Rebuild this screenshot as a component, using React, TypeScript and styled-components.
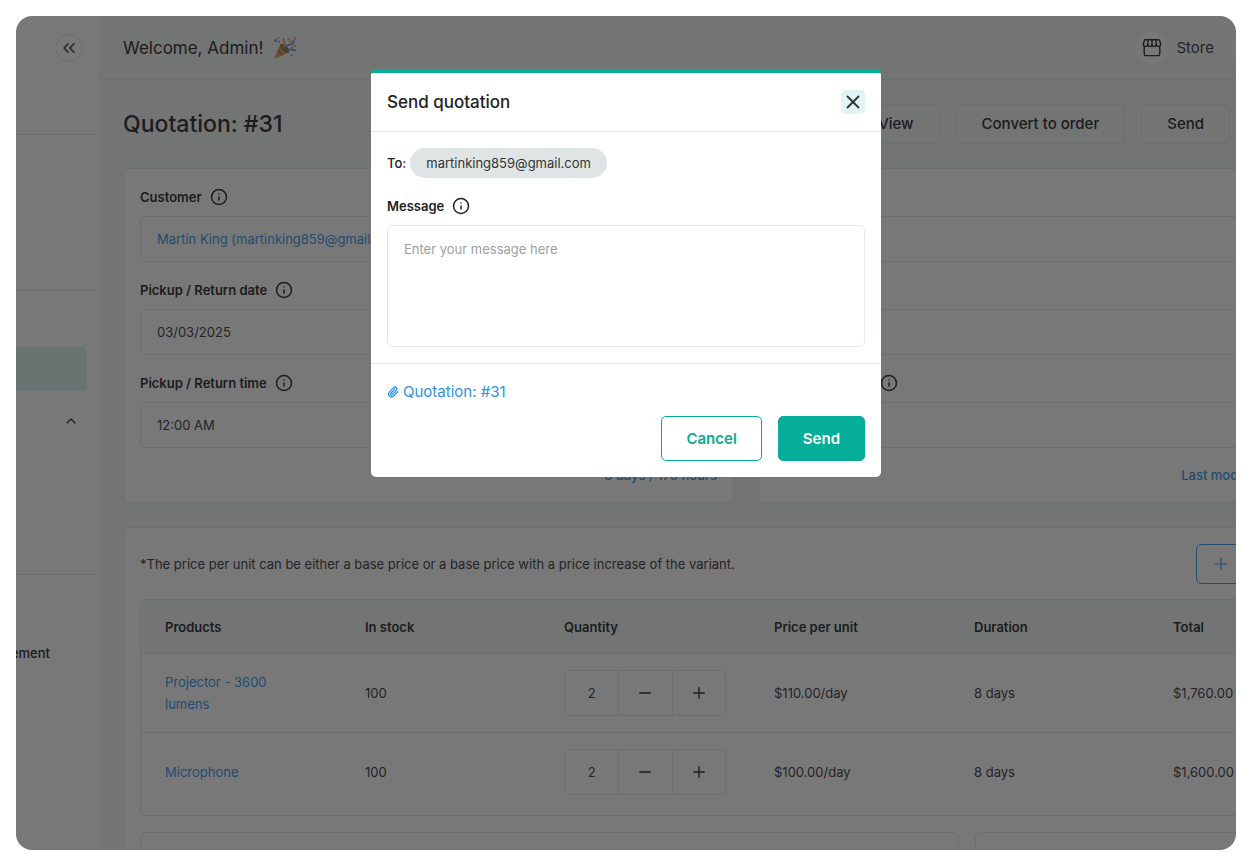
import React from "react";
import styled, { createGlobalStyle, css } from "styled-components";
import { ChevronsLeft, ChevronUp, Info, Minus, Paperclip, Plus, X } from "lucide-react";

const color = {
  text: "#222226",
  body: "#333338",
  teal: "#06ad98",
  tealSoft: "#e0f5f3",
  blue: "#2e93e6",
  line: "#e3e9e8",
  page: "#f3f7f6",
  chip: "#dfe5e4",
  placeholder: "#9aa2a3",
};

const GlobalStyle = createGlobalStyle`
  *, *::before, *::after { box-sizing: border-box; }
  body {
    margin: 0;
    background: #fff;
    color: ${color.body};
    font: 400 13px/22px Inter, "Liberation Sans", sans-serif;
  }
  button, input, textarea { font: inherit; color: inherit; }
  button { cursor: pointer; }
  h1, h2, p { margin: 0; }
  a { color: ${color.blue}; text-decoration: none; }
`;

const Screen = styled.div`
  height: 100vh;
  padding: 16px 16px 17px;
`;

const Frame = styled.div`
  position: relative;
  display: flex;
  height: 100%;
  overflow: hidden;
  border-radius: 16px;
  background: #fff;
`;

const Sidebar = styled.nav`
  display: flex;
  flex: 0 0 83px;
  flex-direction: column;
  overflow: hidden;
`;

const SideSection = styled.div<{ $height?: number; $top?: number }>`
  display: flex;
  flex: none;
  flex-direction: column;
  align-items: flex-end;
  gap: 8px;
  height: ${(p) => (p.$height ? `${p.$height}px` : "auto")};
  margin-right: 4px;
  padding-top: ${(p) => p.$top ?? 0}px;
  & + & { border-top: 1px solid #dfe3e3; }
`;

const CollapseButton = styled.button`
  display: grid;
  place-items: center;
  width: 28px;
  height: 28px;
  margin-right: 12px;
  padding: 0;
  border: 1px solid ${color.line};
  border-radius: 50%;
  background: #fff;
`;

const SideItem = styled.a<{ $active?: boolean; $end?: number }>`
  display: flex;
  align-items: center;
  justify-content: flex-end;
  width: 71px;
  height: 44px;
  margin-right: 8px;
  padding-right: ${(p) => p.$end ?? 8}px;
  border-radius: 0 6px 6px 0;
  background: ${(p) => (p.$active ? "#e0f3f0" : "transparent")};
  color: ${color.text};
  font-weight: 500;
  white-space: nowrap;
`;

const Main = styled.main`
  flex: 1;
  min-width: 0;
  overflow: hidden;
  background: ${color.page};
`;

const TopBar = styled.header`
  display: flex;
  align-items: center;
  justify-content: space-between;
  width: calc(100% + 26px);
  height: 64px;
  padding-left: 24px;
  border-bottom: 1px solid ${color.line};
`;

const Welcome = styled.div`
  display: flex;
  align-items: center;
  gap: 10px;
  color: ${color.text};
  font-size: 17px;
`;

const TopLinks = styled.div`
  display: flex;
  align-items: center;
  gap: 16px;
`;

const StoreLink = styled.a`
  display: flex;
  align-items: center;
  gap: 8px;
  color: ${color.body};
  font-size: 15px;
`;

const Round = styled.span`
  display: grid;
  place-items: center;
  width: 32px;
  height: 32px;
  border-radius: 50%;
  background: #fcfcfc;
`;

const TitleRow = styled.div`
  display: flex;
  align-items: center;
  justify-content: space-between;
  padding: 24px 6px 24px 24px;
`;

const PageTitle = styled.h1`
  color: ${color.text};
  font-size: 23px;
  line-height: 32px;
  font-weight: 500;
`;

const Actions = styled.div`
  display: flex;
  gap: 16px;
`;

const GhostButton = styled.button`
  height: 40px;
  padding: 0 25px;
  border: 1px solid ${color.line};
  border-radius: 6px;
  background: transparent;
  color: ${color.text};
  font-size: 15px;
  font-weight: 500;
`;

const Content = styled.div`
  display: grid;
  gap: 24px;
  width: calc(100% + 157px);
  padding: 0 24px;
`;

const Columns = styled.div`
  display: grid;
  grid-template-columns: 1fr 1fr;
  gap: 24px;
`;

const Card = styled.section`
  padding: 16px;
  border: 1px solid ${color.line};
  border-radius: 6px;
  background: #fff;
`;

const Field = styled.div`
  display: flex;
  flex-direction: column;
  gap: 7px;
  margin-bottom: 16px;
`;

const LabelRow = styled.div`
  display: flex;
  align-items: center;
  gap: 8px;
  height: 24px;
  color: ${color.text};
  font-weight: 600;
`;

const fieldBox = css`
  width: 100%;
  border: 1px solid ${color.line};
  border-radius: 6px;
  background: #fff;
`;

const TextInput = styled.input<{ $link?: boolean }>`
  ${fieldBox}
  height: 46px;
  padding: 0 16px;
  color: ${(p) => (p.$link ? color.blue : color.body)};
`;

const CardNote = styled.div`
  color: ${color.blue};
  font-weight: 500;
  text-align: right;
`;

const ModifiedNote = styled(CardNote)`
  padding-right: 4px;
`;

const NoteRow = styled.div`
  display: flex;
  align-items: center;
  justify-content: space-between;
  margin-bottom: 15px;
`;

const AddButton = styled.button`
  display: flex;
  align-items: center;
  gap: 8px;
  width: 156px;
  height: 40px;
  padding: 0 14px;
  border: 1px solid ${color.blue};
  border-radius: 6px;
  background: #fff;
  color: ${color.blue};
  white-space: nowrap;
`;

const TableFrame = styled.div`
  margin-bottom: 16px;
  padding-bottom: 3px;
  border: 1px solid ${color.line};
  border-radius: 6px;
  overflow: hidden;
`;

const Table = styled.table`
  width: 100%;
  border-collapse: collapse;
  table-layout: fixed;
  tbody tr + tr { border-top: 1px solid ${color.line}; }
`;

const HeadCell = styled.th<{ $width?: number }>`
  width: ${(p) => (p.$width ? `${p.$width}px` : "auto")};
  padding: 16px 24px 15px;
  border-bottom: 1px solid ${color.line};
  background: ${color.page};
  color: ${color.text};
  font-weight: 600;
  text-align: left;
`;

const Cell = styled.td`
  height: 79px;
  padding: 16px 24px;
  vertical-align: middle;
`;

const ProductLink = styled.a`
  display: block;
  max-width: 120px;
`;

const Stepper = styled.div`
  display: grid;
  grid-template-columns: repeat(3, 1fr);
  width: 162px;
  height: 46px;
  border: 1px solid ${color.line};
  border-radius: 6px;
  overflow: hidden;
`;

const StepperInput = styled.input`
  width: 100%;
  padding: 0;
  border: 0;
  background: none;
  text-align: center;
`;

const StepperButton = styled.button`
  display: grid;
  place-items: center;
  padding: 0;
  border: 0;
  border-left: 1px solid ${color.line};
  background: none;
  color: ${color.text};
`;

const Summary = styled.div`
  display: grid;
  grid-template-columns: 819fr 377fr;
  gap: 16px;
`;

const SummaryBox = styled.div`
  height: 120px;
  border: 1px solid ${color.line};
  border-radius: 6px;
`;

const Backdrop = styled.div`
  position: absolute;
  inset: 0;
  display: flex;
  align-items: flex-start;
  justify-content: center;
  padding-top: 53px;
  background: rgba(26, 26, 26, 0.59);
`;

const Dialog = styled.div`
  width: 510px;
  max-width: 100%;
  border-top: 4px solid ${color.teal};
  border-radius: 5px;
  background: #fff;
`;

const DialogHeader = styled.div`
  display: flex;
  align-items: center;
  justify-content: space-between;
  padding: 16px;
  border-bottom: 1px solid ${color.line};
`;

const DialogTitle = styled.h2`
  color: ${color.text};
  font-size: 17px;
  line-height: 26px;
  font-weight: 500;
`;

const CloseButton = styled.button`
  display: grid;
  place-items: center;
  width: 24px;
  height: 24px;
  padding: 0;
  border: 0;
  border-radius: 5px;
  background: ${color.tealSoft};
`;

const DialogBody = styled.div`
  padding: 16px;
`;

const Recipient = styled.div`
  display: flex;
  align-items: center;
  gap: 4px;
  margin-bottom: 16px;
  color: ${color.text};
  font-weight: 500;
`;

const Chip = styled.span`
  padding: 4px 16px;
  border-radius: 15px;
  background: ${color.chip};
  color: ${color.body};
  font-weight: 400;
`;

const MessageLabel = styled(LabelRow)`
  margin-bottom: 7px;
`;

const MessageBox = styled.textarea`
  ${fieldBox}
  display: block;
  height: 122px;
  padding: 12px 16px;
  resize: none;
  &::placeholder { color: ${color.placeholder}; opacity: 1; }
`;

const DialogFooter = styled.div`
  display: grid;
  gap: 12px;
  padding: 16px;
  border-top: 1px solid ${color.line};
`;

const Attachment = styled.a`
  display: flex;
  align-items: center;
  gap: 4px;
  font-size: 15px;
  line-height: 24px;
`;

const DialogActions = styled.div`
  display: flex;
  justify-content: flex-end;
  gap: 16px;
`;

const ActionButton = styled.button<{ $primary?: boolean }>`
  height: 45px;
  padding: 0 24px;
  border: 1px solid ${color.teal};
  border-radius: 5px;
  background: ${(p) => (p.$primary ? color.teal : "#fff")};
  color: ${(p) => (p.$primary ? "#fff" : color.teal)};
  font-size: 15px;
  font-weight: 600;
`;

const PartyPopper = () => (
  <svg width="24" height="24" viewBox="0 0 24 24" aria-hidden="true">
    <path d="M7.5 8 L16 16.5 L2.6 22.2 Q1 22.6 1.6 21 Z" fill="#e0a356" />
    <path d="M5.6 12.6 L11 18.6 L8.2 19.8 L4.4 15.4 Z" fill="#b9803f" />
    <ellipse cx="11.8" cy="12.2" rx="5.8" ry="2.8" transform="rotate(45 11.8 12.2)" fill="#94683a" />
    <path d="M10.5 11.5 Q12.5 7.5 10.5 3" fill="none" stroke="#dfa053" strokeWidth="1.8" strokeLinecap="round" />
    <path d="M12.5 12.5 Q13.5 8.5 17 8.6 T20.5 4.5" fill="none" stroke="#5b95c8" strokeWidth="1.8" strokeLinecap="round" />
    <path d="M14 14.5 Q17 12.4 22.5 14.4" fill="none" stroke="#5b95c8" strokeWidth="1.6" strokeLinecap="round" />
    <g fill="#dfa053">
      <rect x="14.4" y="2" width="2.2" height="2.2" />
      <rect x="20.6" y="8.6" width="2.2" height="2.2" />
      <circle cx="19.3" cy="11.6" r="1" />
    </g>
    <g fill="#5b95c8">
      <rect x="1.4" y="3.4" width="2.4" height="2.4" />
      <circle cx="6" cy="5.4" r="1" />
      <circle cx="18.6" cy="19.4" r="1.1" />
    </g>
    <g fill="#cf7468">
      <circle cx="5.2" cy="2" r="1" />
      <circle cx="22" cy="2.4" r="1" />
      <circle cx="17.4" cy="5.4" r="0.9" />
    </g>
  </svg>
);

const StoreIcon = () => (
  <svg
    width="20"
    height="20"
    viewBox="0 0 20 20"
    fill="none"
    stroke={color.text}
    strokeWidth="1.4"
    strokeLinecap="round"
    strokeLinejoin="round"
    aria-hidden="true"
  >
    <path d="M3.4 1.8 H16.6 Q17.4 1.8 17.7 2.8 L18.6 5.6 V6.4 A2.1 1.9 0 0 1 14.3 6.4 A2.1 1.9 0 0 1 10 6.4 A2.1 1.9 0 0 1 5.7 6.4 A2.1 1.9 0 0 1 1.4 6.4 V5.6 L2.3 2.8 Q2.6 1.8 3.4 1.8 Z" />
    <path d="M6.2 1.8 L5.7 6.4 M10 1.8 V6.4 M13.8 1.8 L14.3 6.4" />
    <path d="M2.2 8.6 V16 Q2.2 17.6 3.8 17.6 H16.2 Q17.8 17.6 17.8 16 V8.6" />
  </svg>
);

const Hint = () => <Info size={18} strokeWidth={2} aria-hidden="true" />;

type LabeledInputProps = { id: string; label: string; value: string; link?: boolean };

const LabeledInput = ({ id, label, value, link }: LabeledInputProps) => (
  <Field>
    <LabelRow>
      <label htmlFor={id}>{label}</label>
      <Hint />
    </LabelRow>
    <TextInput id={id} defaultValue={value} $link={link} />
  </Field>
);

const columns = [
  { title: "Products", width: 200 },
  { title: "In stock", width: 199 },
  { title: "Quantity", width: 210 },
  { title: "Price per unit", width: 200 },
  { title: "Duration", width: 199 },
  { title: "Total" },
];

const products = [
  { name: "Projector - 3600 lumens", stock: 100, quantity: 2, price: "$110.00/day", duration: "8 days", total: "$1,760.00" },
  { name: "Microphone", stock: 100, quantity: 2, price: "$100.00/day", duration: "8 days", total: "$1,600.00" },
];

const SendQuotationDialog = () => (
  <Backdrop>
    <Dialog role="dialog" aria-modal="true" aria-labelledby="dialog-title">
      <DialogHeader>
        <DialogTitle id="dialog-title">Send quotation</DialogTitle>
        <CloseButton type="button" aria-label="Close">
          <X size={22} strokeWidth={2} />
        </CloseButton>
      </DialogHeader>
      <DialogBody>
        <Recipient>
          To: <Chip>martinking859@gmail.com</Chip>
        </Recipient>
        <MessageLabel>
          <label htmlFor="message">Message</label>
          <Hint />
        </MessageLabel>
        <MessageBox id="message" placeholder="Enter your message here" />
      </DialogBody>
      <DialogFooter>
        <Attachment href="#quotation">
          <Paperclip size={12} strokeWidth={2.6} aria-hidden="true" />
          Quotation: #31
        </Attachment>
        <DialogActions>
          <ActionButton type="button">Cancel</ActionButton>
          <ActionButton type="button" $primary>
            Send
          </ActionButton>
        </DialogActions>
      </DialogFooter>
    </Dialog>
  </Backdrop>
);

export default function App() {
  return (
    <Screen>
      <GlobalStyle />
      <Frame>
        <Sidebar aria-label="Main">
          <SideSection $height={118} $top={18}>
            <CollapseButton type="button" aria-label="Collapse sidebar">
              <ChevronsLeft size={20} strokeWidth={1.8} />
            </CollapseButton>
          </SideSection>
          <SideSection $height={156} />
          <SideSection $height={284} $top={56}>
            <SideItem href="#quotations" $active aria-label="Quotations" />
            <SideItem href="#more" aria-label="More">
              <ChevronUp size={16} strokeWidth={1.8} />
            </SideItem>
          </SideSection>
          <SideSection $top={56}>
            <SideItem href="#management" $end={37}>
              Management
            </SideItem>
          </SideSection>
        </Sidebar>

        <Main>
          <TopBar>
            <Welcome>
              Welcome, Admin! <PartyPopper />
            </Welcome>
            <TopLinks>
              <StoreLink href="#store">
                <Round>
                  <StoreIcon />
                </Round>
                Store
              </StoreLink>
              <Round />
            </TopLinks>
          </TopBar>

          <TitleRow>
            <PageTitle>Quotation: #31</PageTitle>
            <Actions>
              <GhostButton type="button">View</GhostButton>
              <GhostButton type="button">Convert to order</GhostButton>
              <GhostButton type="button">Send</GhostButton>
            </Actions>
          </TitleRow>

          <Content>
            <Columns>
              <Card>
                <LabeledInput id="customer" label="Customer" value="Martin King (martinking859@gmail.com)" link />
                <LabeledInput id="date" label="Pickup / Return date" value="03/03/2025" />
                <LabeledInput id="time" label="Pickup / Return time" value="12:00 AM" />
                <CardNote>8 days / 176 hours</CardNote>
              </Card>
              <Card>
                <LabeledInput id="status" label="Status" value="" />
                <LabeledInput id="location" label="Location" value="" />
                <LabeledInput id="payment" label="Payment status" value="" />
                <ModifiedNote>Last modified: 03/03/2025</ModifiedNote>
              </Card>
            </Columns>

            <Card>
              <NoteRow>
                <p>*The price per unit can be either a base price or a base price with a price increase of the variant.</p>
                <AddButton type="button">
                  <Plus size={20} strokeWidth={1.4} /> Add product
                </AddButton>
              </NoteRow>
              <TableFrame>
                <Table>
                  <thead>
                    <tr>
                      {columns.map((c) => (
                        <HeadCell key={c.title} $width={c.width} scope="col">
                          {c.title}
                        </HeadCell>
                      ))}
                    </tr>
                  </thead>
                  <tbody>
                    {products.map((p) => (
                      <tr key={p.name}>
                        <Cell>
                          <ProductLink href="#product">{p.name}</ProductLink>
                        </Cell>
                        <Cell>{p.stock}</Cell>
                        <Cell>
                          <Stepper>
                            <StepperInput aria-label={`Quantity of ${p.name}`} defaultValue={p.quantity} />
                            <StepperButton type="button" aria-label="Decrease">
                              <Minus size={18} strokeWidth={1.8} />
                            </StepperButton>
                            <StepperButton type="button" aria-label="Increase">
                              <Plus size={18} strokeWidth={1.8} />
                            </StepperButton>
                          </Stepper>
                        </Cell>
                        <Cell>{p.price}</Cell>
                        <Cell>{p.duration}</Cell>
                        <Cell>{p.total}</Cell>
                      </tr>
                    ))}
                  </tbody>
                </Table>
              </TableFrame>
              <Summary>
                <SummaryBox />
                <SummaryBox />
              </Summary>
            </Card>
          </Content>
        </Main>

        <SendQuotationDialog />
      </Frame>
    </Screen>
  );
}
